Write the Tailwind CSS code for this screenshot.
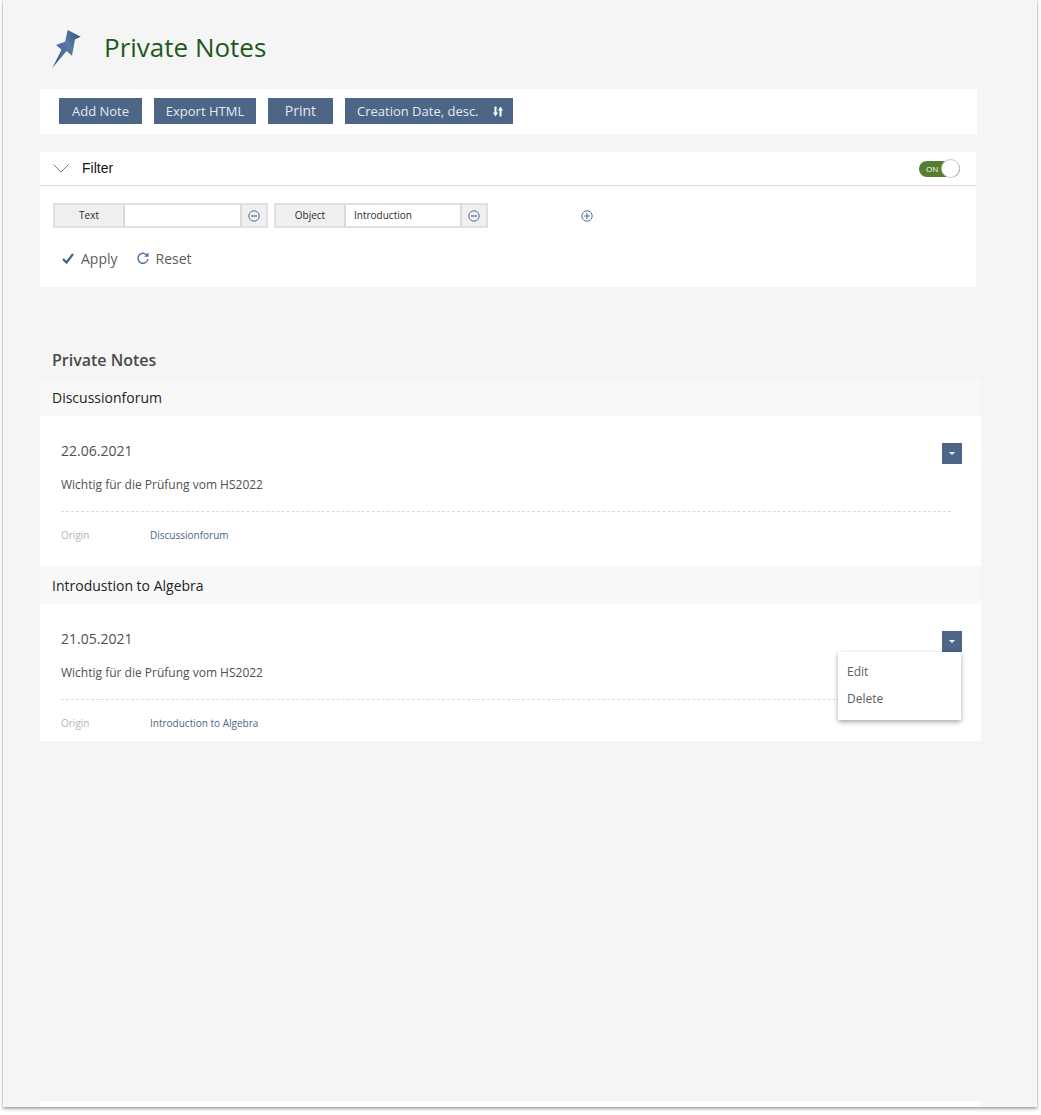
<!DOCTYPE html>
<html lang="en">
  <head>
    <meta charset="UTF-8" />
    <title>Private Notes</title>
    <script src="https://cdn.jsdelivr.net/npm/@tailwindcss/browser@4"></script>
  </head>
  <body class="bg-white min-h-[1115px] font-['Open_Sans',sans-serif] text-[#4c4c4c]">
    <div class="ml-[3px] w-[1034px] h-[1107px] bg-[#f5f5f5] shadow-[0_2px_3px_rgba(0,0,0,0.32),0_0_2px_rgba(0,0,0,0.18)] overflow-hidden flex flex-col pl-[37px]">
      <!-- Title -->
      <div class="h-[89px] flex items-start pt-[28px]">
        <svg class="ml-[11px] mt-[1px] w-[31px] h-[40px] shrink-0" viewBox="0 0 31 40">
          <defs>
            <linearGradient id="pin" x1="0" y1="1" x2="1" y2="0.2">
              <stop offset="0" stop-color="#3a5a8a" />
              <stop offset="0.65" stop-color="#5a78a2" />
              <stop offset="1" stop-color="#385887" />
            </linearGradient>
          </defs>
          <path d="M16.7 1 L29.7 7.7 L24 10.5 L21 26.7 L15.5 22 L1.3 39 L10.5 20.8 L5 16 L14 12.7 Z" fill="url(#pin)" />
        </svg>
        <h1 class="ml-[22px] text-[26px] leading-[38px] text-[#1c5a1c]">Private Notes</h1>
      </div>

      <!-- Toolbar -->
      <div class="w-[937px] h-[45px] bg-white flex items-start pt-[9px] pl-[19px] gap-[12px] text-[13px] text-[#e6eaf0]">
        <button class="w-[83px] h-[26px] pt-[1px] bg-[#4d6586]">Add Note</button>
        <button class="w-[102px] h-[26px] pt-[1px] bg-[#4d6586]">Export HTML</button>
        <button class="w-[65px] h-[26px] pb-[1px] bg-[#4d6586] text-[14px]">Print</button>
        <button class="w-[168px] h-[26px] pt-[1px] bg-[#4d6586] flex items-center pl-[12px]">
          Creation Date, desc.
          <svg class="ml-[14px] w-[10px] h-[11px]" viewBox="0 0 10 11" fill="none" stroke="#fff" stroke-width="2">
            <path d="M2.5 0.5V8M7.5 3V10.5" />
            <path d="M0 6.5L2.5 10.5L5 6.5Z M5 4.5L7.5 0.5L10 4.5Z" fill="#fff" stroke="none" />
          </svg>
        </button>
      </div>

      <!-- Filter -->
      <div class="mt-[18px] w-[936px] h-[135px] bg-white">
        <div class="h-[34px] border-b border-[#d9d9d9] flex items-center pl-[13px] pr-[16px]">
          <svg class="w-[16px] h-[9px]" viewBox="0 0 16 9" fill="none" stroke="#5a7296" stroke-width="0.9"><path d="M0.5 0.5L8 8L15.5 0.5" /></svg>
          <span class="ml-[13px] text-[14px] text-[#161616] font-['Liberation_Sans',sans-serif]">Filter</span>
          <div class="ml-auto relative w-[41px] h-[16px] rounded-full bg-[#557e31] text-[8px] leading-[16px] text-white pl-[7px]">
            ON
            <div class="absolute right-0 top-[-2px] w-[19px] h-[19px] rounded-full bg-white border border-[#c9c9c9]"></div>
          </div>
        </div>
        <div class="flex items-center pt-[17px] pl-[13px] text-[10px] text-[#2a2a2a]">
          <div class="w-[215px] h-[25px] flex border-2 border-[#e0e0e0] bg-[#efefef]">
            <div class="w-[70px] flex items-center justify-center border-r-2 border-[#d9d9d9]">Text</div>
            <div class="flex-1 bg-white"></div>
            <div class="w-[26px] flex items-center justify-center border-l-2 border-[#d9d9d9]">
              <svg class="w-[12px] h-[12px]" viewBox="0 0 12 12" fill="none" stroke="#4d6f9c"><circle cx="6" cy="6" r="5.2" /><path d="M3 6H9" stroke-width="1.2" /></svg>
            </div>
          </div>
          <div class="ml-[6px] w-[214px] h-[25px] flex border-2 border-[#e0e0e0] bg-[#efefef]">
            <div class="w-[70px] flex items-center justify-center border-r-2 border-[#d9d9d9]">Object</div>
            <div class="flex-1 bg-white flex items-center pl-[8px]">Introduction</div>
            <div class="w-[26px] flex items-center justify-center border-l-2 border-[#d9d9d9]">
              <svg class="w-[12px] h-[12px]" viewBox="0 0 12 12" fill="none" stroke="#4d6f9c"><circle cx="6" cy="6" r="5.2" /><path d="M3 6H9" stroke-width="1.2" /></svg>
            </div>
          </div>
          <svg class="ml-[93px] w-[12px] h-[12px]" viewBox="0 0 12 12" fill="none" stroke="#4d6f9c"><circle cx="6" cy="6" r="5.2" /><path d="M3 6H9M6 3V9" stroke-width="1.1" /></svg>
        </div>
        <div class="flex items-center mt-[20px] pl-[22px] text-[14px] text-[#5c5c5c]">
          <svg class="w-[12px] h-[11px]" viewBox="0 0 12 11" fill="none" stroke="#3f5f8c" stroke-width="2.2"><path d="M1 6L4.5 9.5L11 1" /></svg>
          <span class="ml-[7px]">Apply</span>
          <svg class="ml-[19px] -mt-[2px] w-[12px] h-[12px]" viewBox="0 0 12 12" fill="none" stroke="#4d6f9c" stroke-width="1.4"><path d="M10.5 4A5 5 0 1 0 11 7" /><path d="M11.5 0.5V4.8H7.2Z" fill="#4d6f9c" stroke="none" /></svg>
          <span class="ml-[7px]">Reset</span>
        </div>
      </div>

      <!-- Notes -->
      <h2 class="mt-[62px] ml-[12px] h-[30px] text-[16px] leading-[22px] font-semibold text-[#4a4a4a]">Private Notes</h2>
      <div class="w-[941px]">
        <div class="h-[37px] bg-[#f8f8f8] pl-[12px] flex items-center text-[14px] text-[#222]">Discussionforum</div>
        <div class="h-[150px] bg-white px-[21px] relative">
          <div class="pt-[25px] text-[14px] leading-[20px] text-[#505050]">22.06.2021</div>
          <div class="mt-[15px] text-[12px] leading-[18px] text-[#505050]">Wichtig für die Prüfung vom HS2022</div>
          <div class="mt-[17px] w-[890px] border-t border-dashed border-[#dcdcdc]"></div>
          <div class="mt-[15px] flex text-[10px] leading-[16px]">
            <span class="w-[89px] text-[#b4b4b4]">Origin</span>
            <span class="text-[#4d6586]">Discussionforum</span>
          </div>
          <button class="absolute right-[19px] top-[27px] w-[20px] h-[21px] bg-[#4d6586] flex items-center justify-center">
            <svg class="w-[6px] h-[3px]" viewBox="0 0 6 3"><path d="M0 0H6L3 3Z" fill="#fff" /></svg>
          </button>
        </div>
        <div class="h-[38px] bg-[#f8f8f8] pl-[12px] flex items-center text-[14px] text-[#222]">Introdustion to Algebra</div>
        <div class="h-[137px] bg-white px-[21px] relative">
          <div class="pt-[25px] text-[14px] leading-[20px] text-[#505050]">21.05.2021</div>
          <div class="mt-[15px] text-[12px] leading-[18px] text-[#505050]">Wichtig für die Prüfung vom HS2022</div>
          <div class="mt-[17px] w-[890px] border-t border-dashed border-[#dcdcdc]"></div>
          <div class="mt-[15px] flex text-[10px] leading-[16px]">
            <span class="w-[89px] text-[#b4b4b4]">Origin</span>
            <span class="text-[#4d6586]">Introduction to Algebra</span>
          </div>
          <button class="absolute right-[19px] top-[27px] w-[20px] h-[21px] bg-[#4d6586] flex items-center justify-center">
            <svg class="w-[6px] h-[3px]" viewBox="0 0 6 3"><path d="M0 0H6L3 3Z" fill="#fff" /></svg>
          </button>
          <!-- Menu -->
          <div class="absolute left-[798px] top-[48px] w-[123px] h-[68px] bg-white shadow-[0_2px_5px_rgba(0,0,0,0.35)] pl-[9px] pt-[6px] text-[12px] leading-[27px] text-[#5c5c5c]">
            <div>Edit</div>
            <div>Delete</div>
          </div>
        </div>
      </div>
      <div class="mt-auto w-[941px] h-[6px] bg-white shrink-0"></div>
    </div>
  </body>
</html>
